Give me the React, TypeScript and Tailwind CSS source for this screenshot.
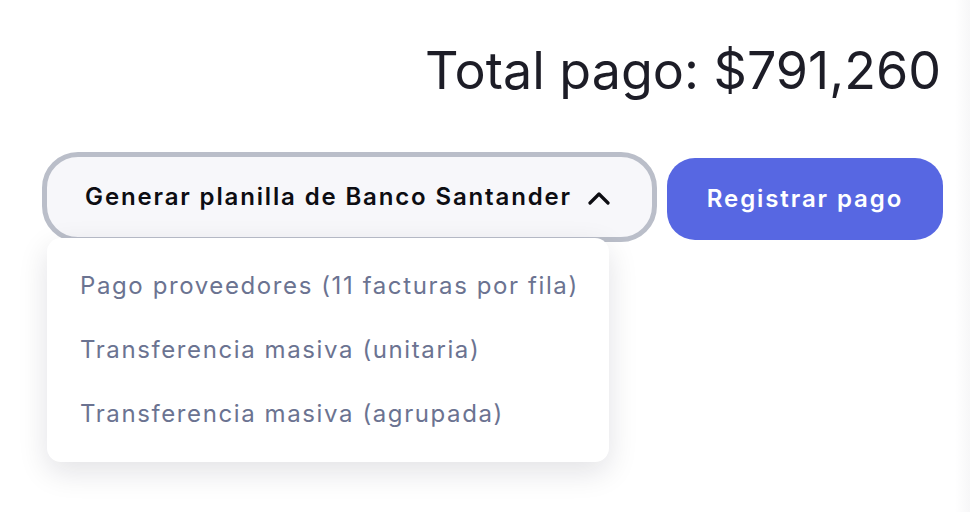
import { useState } from 'react'

const OPTIONS = [
  'Pago proveedores (11 facturas por fila)',
  'Transferencia masiva (unitaria)',
  'Transferencia masiva (agrupada)',
]

function ChevronUp() {
  return (
    <svg width="22" height="14" viewBox="0 0 22 14" fill="none" className="mt-[2px]">
      <path d="M2 12L11 3L20 12" stroke="#0d0d12" strokeWidth="3.2" strokeLinecap="round" strokeLinejoin="round" />
    </svg>
  )
}

export default function App() {
  const [open] = useState(true)

  return (
    <div className="flex h-[512px] w-[970px] bg-white font-['Inter',sans-serif]">
      <div className="flex flex-1 flex-col">
        {/* Total */}
        <div className="flex justify-end pr-[14px] pt-[45px]">
          <h1 className="text-[52px] leading-[52px] font-normal tracking-[0px] text-[#1d1d27]">
            Total pago: $791,260
          </h1>
        </div>

        {/* Actions */}
        <div className="mt-[55px] flex items-start pl-[42px]">
          <div className="relative">
            <button className="flex h-[90px] w-[615px] items-center justify-center gap-[16px] rounded-[36px] border-[5px] border-[#babec9] bg-[#f7f7fa] pr-[4px]">
              <span className="text-[24px] font-semibold tracking-[1.85px] text-[#0d0d12]">
                Generar planilla de Banco Santander
              </span>
              <ChevronUp />
            </button>

            {open && (
              <div className="absolute left-[5px] top-[86px] w-[562px] rounded-[14px] bg-white py-[16px] shadow-[0_10px_30px_rgba(20,20,40,0.12)]">
                {OPTIONS.map((opt) => (
                  <div
                    key={opt}
                    className="flex h-[64px] items-center pl-[33px] text-[24px] font-normal tracking-[1.6px] text-[#6b7391]"
                  >
                    {opt}
                  </div>
                ))}
              </div>
            )}
          </div>

          <button className="mt-[6px] ml-[10px] flex h-[82px] w-[276px] items-center justify-center rounded-[28px] bg-[#5767e2] text-[24px] font-semibold tracking-[1.9px] text-white">
            Registrar pago
          </button>
        </div>
      </div>
      <div className="w-[15px] bg-gradient-to-r from-white to-[#f7f7f8]" />
    </div>
  )
}
